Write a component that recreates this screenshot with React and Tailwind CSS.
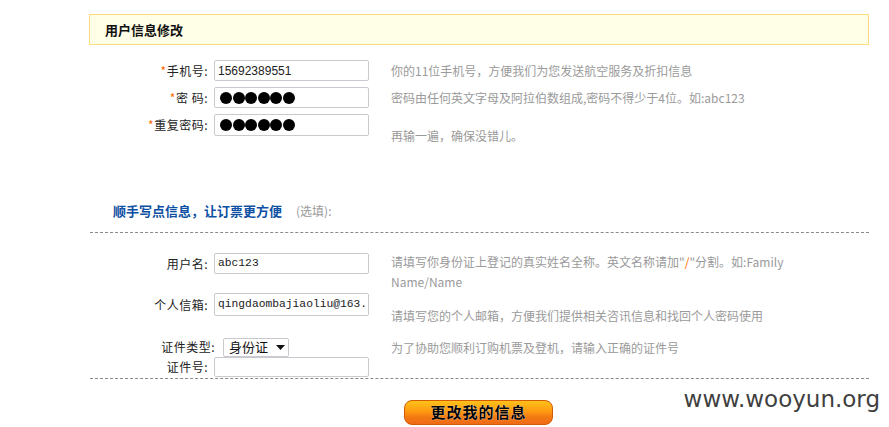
import React from "react";

const cjk = "font-['Noto_Sans_CJK_SC','Noto_Sans',sans-serif]";

function Label({ children, star, w = "w-[119px]" }) {
  return (
    <div className={`${w} shrink-0 text-right text-[12px] leading-[16px] text-[#222] whitespace-nowrap tracking-[0.5px]`}>
      {star && <span className="text-[#ff6a00]">*</span>}
      {children}
    </div>
  );
}

function Box({ children, h = "h-[21px]", mono = false }) {
  return (
    <div
      className={`ml-[6px] w-[155px] ${h} shrink-0 border border-[#c9c9cf] rounded-[2px] bg-white flex items-center px-[3px] overflow-hidden whitespace-nowrap text-[#222] ${
        mono ? "font-['Liberation_Mono',monospace] text-[11.3px]" : "font-['Liberation_Sans',sans-serif] text-[12px]"
      }`}
    >
      {children}
    </div>
  );
}

function Dots() {
  return (
    <div className="flex gap-[0.5px] ml-[2px]">
      {[0, 1, 2, 3, 4, 5].map((i) => (
        <div key={i} className="w-[12px] h-[12px] rounded-full bg-black" />
      ))}
    </div>
  );
}

function Hint({ children, cls = "" }) {
  return (
    <div className={`ml-[22px] text-[12px] leading-[16px] text-[#9a9a9a] whitespace-nowrap ${cls}`}>
      {children}
    </div>
  );
}

export default function App() {
  return (
    <div className={`relative w-[889px] h-[427px] bg-white overflow-hidden ${cjk}`}>
      <div className="ml-[89px] w-[780px] pt-[14px]">
        {/* header */}
        <div className="h-[31px] border border-[#ffdc80] bg-[#fffee6] flex items-center pl-[15px]">
          <span className="text-[13px] font-bold text-[#111]">用户信息修改</span>
        </div>

        {/* required rows */}
        <div className="mt-[15px] flex items-center h-[21px]">
          <Label star>手机号:</Label>
          <Box>15692389551</Box>
          <Hint>你的11位手机号，方便我们为您发送航空服务及折扣信息</Hint>
        </div>
        <div className="mt-[6px] flex items-center h-[21px]">
          <Label star>
            密&nbsp;码:
          </Label>
          <Box>
            <Dots />
          </Box>
          <Hint>密码由任何英文字母及阿拉伯数组成,密码不得少于4位。如:abc123</Hint>
        </div>
        <div className="mt-[6px] flex items-start h-[30px]">
          <div className="h-[22px] flex items-center">
            <Label star>重复密码:</Label>
            <Box h="h-[22px]">
              <Dots />
            </Box>
          </div>
          <Hint cls="mt-[14px]">再输一遍，确保没错儿。</Hint>
        </div>

        {/* optional section */}
        <div className="mt-[59px] pl-[24px] flex items-center h-[16px]">
          <span className="text-[13px] font-bold text-[#0d50a3]">顺手写点信息，让订票更方便</span>
          <span className="ml-[14px] text-[12px] text-[#9a9a9a]">(选填):</span>
        </div>
        <div className="mt-[13px] ml-[1px] w-[779px] border-t border-dashed border-[#8a8a8a]" />

        <div className="mt-[20px] flex items-start h-[40px]">
          <div className="h-[21px] flex items-center">
            <Label>用户名:</Label>
            <Box mono>abc123</Box>
          </div>
          <Hint cls="leading-[20px] -mt-[1px]">
            请填写你身份证上登记的真实姓名全称。英文名称请加"<span className="text-[#ff6a00]">/</span>"分割。如:Family
            <br />
            Name/Name
          </Hint>
        </div>
        <div className="flex items-start h-[31px]">
          <div className="h-[23px] flex items-center">
            <Label>个人信箱:</Label>
            <Box h="h-[23px]" mono>
              qingdaombajiaoliu@163.
            </Box>
          </div>
          <Hint cls="mt-[15px]">请填写您的个人邮箱，方便我们提供相关咨讯信息和找回个人密码使用</Hint>
        </div>
        <div className="mt-[13px] flex items-center h-[20px]">
          <Label w="w-[126px]">证件类型:</Label>
          <div className="ml-[8px] w-[66px] h-[19px] border border-[#c9c9cf] rounded-[2px] bg-white flex items-center pl-[5px] text-[13px] text-[#111]">
            <span>身份证</span>
            <svg className="ml-[8px]" width="9" height="5" viewBox="0 0 9 5">
              <path d="M0 0 H9 L4.5 5 Z" fill="#111" />
            </svg>
          </div>
          <Hint cls="ml-[102px] mt-[2px]">为了协助您顺利订购机票及登机，请输入正确的证件号</Hint>
        </div>
        <div className="flex items-center h-[20px]">
          <Label>证件号:</Label>
          <Box h="h-[20px]" />
        </div>
        <div className="mt-[1px] ml-[1px] w-[779px] border-t border-dashed border-[#8a8a8a]" />

        <div className="mt-[21px] ml-[315px] w-[149px] h-[25px] rounded-[8px] border border-[#d45a00] bg-[linear-gradient(#ffc21a,#ff9a10_45%,#f27a12_70%,#f06a18)] flex items-center justify-center">
          <span className="text-[15px] font-bold text-black tracking-[1px] [text-shadow:0_0_1px_#fff]">更改我的信息</span>
        </div>
      </div>

      <div className="absolute right-[9px] top-[384px] text-[23px] leading-[30px] text-[#3f3f3f] font-['DejaVu_Sans',sans-serif] whitespace-nowrap">
        www.wooyun.org
      </div>
    </div>
  );
}
